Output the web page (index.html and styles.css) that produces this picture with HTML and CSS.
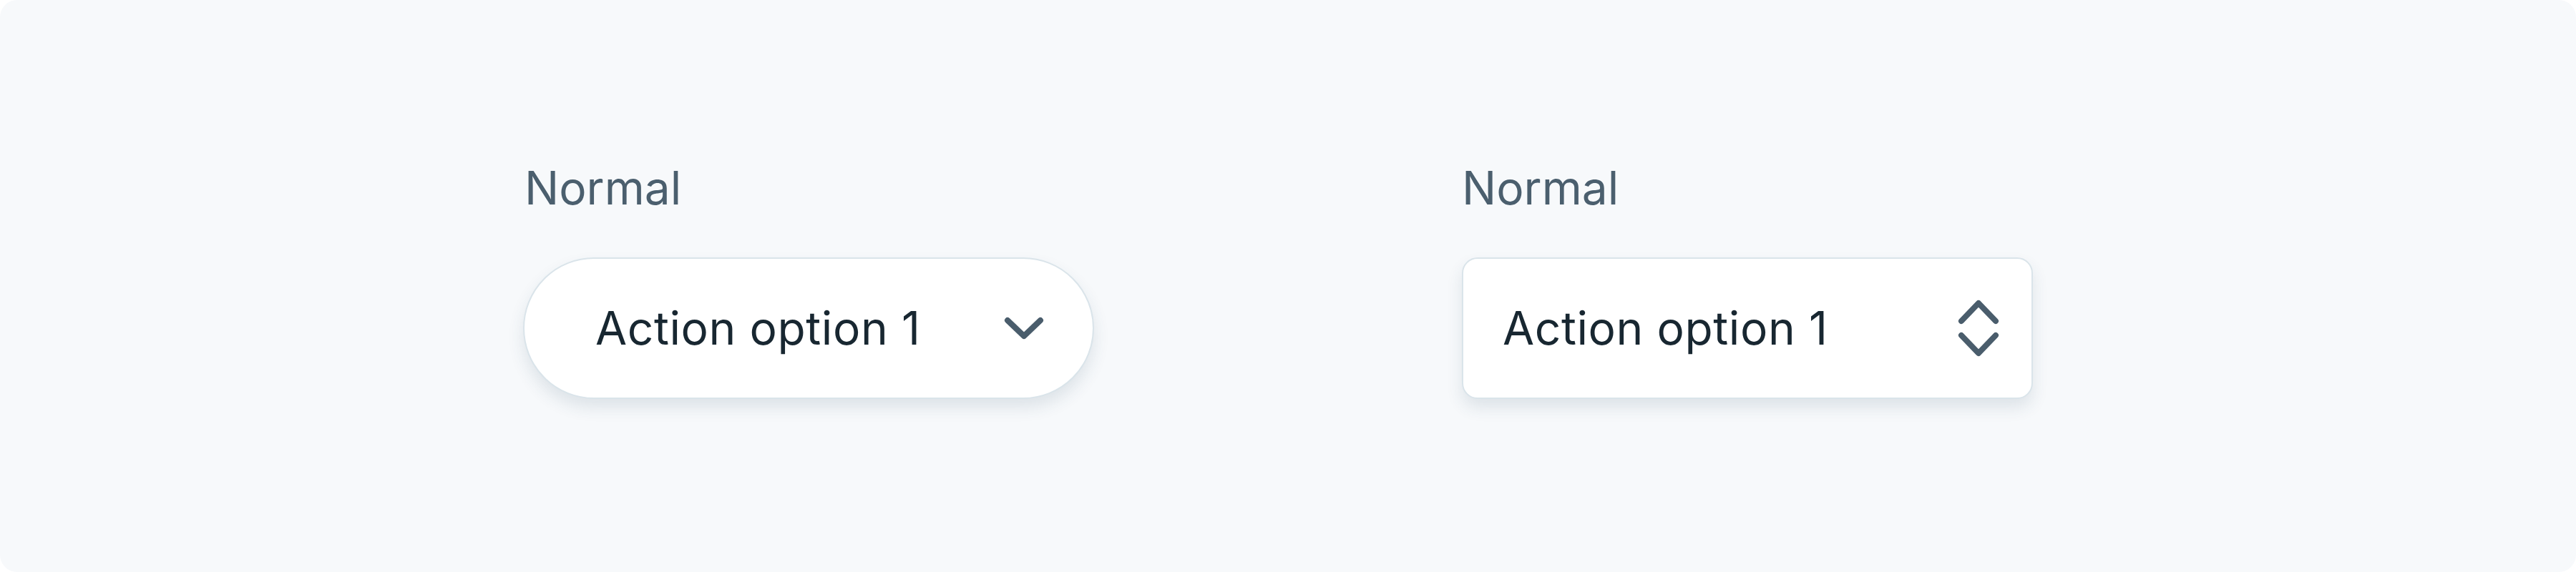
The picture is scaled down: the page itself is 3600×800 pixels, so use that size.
FILE: index.html
```html
<!DOCTYPE html>
<html lang="en">
<head>
<meta charset="UTF-8" />
<meta name="viewport" content="width=device-width, initial-scale=1" />
<title>Select fields</title>
<link rel="stylesheet" href="styles.css">
</head>
<body>

<div class="canvas">
  <div class="field-group">
    <div class="label">Normal</div>
    <div class="select pill">
      <span class="select-text">Action option 1</span>
      <svg class="chevron" width="54" height="30" viewBox="0 0 54 30">
        <path d="M4 4 L27 26 L50 4" />
      </svg>
    </div>
  </div>

  <div class="field-group">
    <div class="label label-right">Normal</div>
    <div class="select box">
      <span class="select-text">Action option 1</span>
      <svg class="updown" width="56" height="80" viewBox="0 0 56 80">
        <path d="M4 30 L28 5 L52 30" />
        <path d="M4 50 L28 75 L52 50" />
      </svg>
    </div>
  </div>
</div>

</body>
</html>
```

FILE: styles.css
```css
html, body {
  margin: 0;
  padding: 0;
  background: #ffffff;
}
body {
  font-family: Inter, "Noto Sans", "Liberation Sans", sans-serif;
}
.canvas {
  width: 3600px;
  height: 800px;
  box-sizing: border-box;
  background: #f7f9fb;
  border-radius: 24px;
  display: flex;
  gap: 514px;
  padding-top: 224px;
  padding-left: 731px;
}
.field-group {
  display: flex;
  flex-direction: column;
  width: 798px;
}
.label {
  font-size: 64px;
  line-height: 78px;
  color: #4b5f6e;
  margin-left: 2px;
  margin-bottom: 58px;
}
.label-right {
  margin-left: 0;
}
.select {
  height: 198px;
  box-sizing: border-box;
  background: #ffffff;
  border: 2px solid #dae4ea;
  display: flex;
  align-items: center;
  justify-content: space-between;
  box-shadow: 0 12px 22px rgba(40, 70, 95, 0.12);
}
.pill {
  border-radius: 99px;
  padding: 0 69px 0 99px;
}
.box {
  border-radius: 22px;
  padding: 0 46px 0 55px;
}
.select-text {
  font-size: 64px;
  line-height: 78px;
  letter-spacing: 0.6px;
  color: #182731;
}
.chevron, .updown {
  overflow: visible;
}
.chevron path, .updown path {
  fill: none;
  stroke: #4a5d6c;
  stroke-width: 8;
  stroke-linecap: round;
  stroke-linejoin: round;
}
```
